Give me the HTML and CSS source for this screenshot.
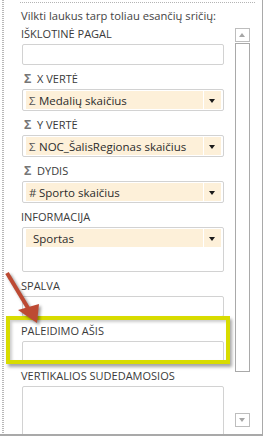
FILE: index.html
```html
<!DOCTYPE html>
<html lang="lt">
<head>
<meta charset="utf-8">
<title>Laukų sritys</title>
<link rel="stylesheet" href="styles.css">
</head>
<body>
<div class="pane">
  <div class="hint">Vilkti laukus tarp toliau esančių sričių:</div>
  <div class="main">
    <div class="fields">
      <section class="area">
        <div class="label">IŠKLOTINĖ PAGAL</div>
        <div class="box"></div>
      </section>
      <section class="area">
        <div class="label"><span class="sigma">Σ</span>X VERTĖ</div>
        <div class="box"><div class="item"><span class="sym">Σ</span><span class="name">Medalių skaičius</span><span class="drop"></span></div></div>
      </section>
      <section class="area">
        <div class="label"><span class="sigma">Σ</span>Y VERTĖ</div>
        <div class="box"><div class="item"><span class="sym">Σ</span><span class="name">NOC_ŠalisRegionas skaičius</span><span class="drop"></span></div></div>
      </section>
      <section class="area">
        <div class="label"><span class="sigma">Σ</span>DYDIS</div>
        <div class="box"><div class="item"><span class="sym hash">#</span><span class="name">Sporto skaičius</span><span class="drop"></span></div></div>
      </section>
      <section class="area">
        <div class="label">INFORMACIJA</div>
        <div class="box tall"><div class="item"><span class="name plain">Sportas</span><span class="drop"></span></div></div>
      </section>
      <section class="area">
        <div class="label">SPALVA</div>
        <div class="box"></div>
      </section>
      <section class="area">
        <div class="label">PALEIDIMO AŠIS</div>
        <div class="box"></div>
      </section>
      <section class="area">
        <div class="label">VERTIKALIOS SUDEDAMOSIOS</div>
        <div class="box big"></div>
      </section>
    </div>
    <div class="scroll">
      <div class="sbtn up"></div>
      <div class="thumb"></div>
      <div class="gap"></div>
      <div class="sbtn down"></div>
    </div>
  </div>
  <div class="highlight"></div>
  <svg class="arrow" width="60" height="70" viewBox="0 0 60 70">
    <line x1="7" y1="4" x2="28" y2="39" class="shaft"/>
    <polygon points="18,41 39,35 37,54" class="head"/>
  </svg>
</div>
</body>
</html>
```

FILE: styles.css
```css
html, body {
  margin: 0;
  padding: 0;
  background: #ffffff;
}
body {
  width: 268px;
  height: 438px;
  overflow: hidden;
  font-family: "Open Sans", "Noto Sans", "Liberation Sans", sans-serif;
  color: #3c3c3c;
}
.pane {
  position: relative;
  width: 263px;
  height: 436px;
  box-sizing: border-box;
  border-right: 1px solid #a9a9a9;
  border-bottom: 2px solid #a9a9a9;
  overflow: hidden;
  padding-top: 2px;
  background:
    repeating-linear-gradient(to bottom, #b8b8b8 0 1px, transparent 1px 2px) 2px 0 / 2px 100% no-repeat,
    #ffffff;
}
.hint {
  margin: 0 7px 0 20px;
  border-top: 1px dotted #b4b4b4;
  padding: 5px 0 0 1px;
  font-size: 11.2px;
  line-height: 16px;
  color: #444;
}
.main {
  display: flex;
  gap: 11px;
  padding-left: 21px;
  margin-top: 3px;
}
.fields {
  width: 203px;
  display: flex;
  flex-direction: column;
}
.area {
  display: flex;
  flex-direction: column;
  margin-bottom: 7px;
}
.label {
  font-size: 11px;
  line-height: 14px;
  height: 14px;
  margin-bottom: 3px;
  color: #3a3a3a;
  white-space: nowrap;
}
.sigma {
  display: inline-block;
  width: 16px;
  padding-left: 3px;
  box-sizing: border-box;
  color: #767676;
  font-weight: 700;
  font-size: 12.5px;
  line-height: 14px;
}
.box {
  margin-left: 1px;
  height: 21px;
  box-sizing: border-box;
  border: 1px solid #d2d2d2;
  border-radius: 2px;
  padding: 1px 2px 1px 3px;
}
.box:has(.item) {
  height: 22px;
}
.box.tall {
  height: 45px;
}
.box.big {
  height: 80px;
}
.item {
  display: flex;
  align-items: center;
  height: 18px;
  background: #fdf0d9;
  font-size: 11.5px;
  color: #2b2b2b;
}
.sym {
  width: 13px;
  padding-left: 3px;
  box-sizing: border-box;
  color: #555;
  flex: none;
}
.sym.hash {
  color: #444;
}
.name {
  flex: 1;
  white-space: nowrap;
  overflow: hidden;
}
.name.plain {
  padding-left: 7px;
}
.drop {
  flex: none;
  width: 17px;
  height: 18px;
  border-left: 1px solid #ffffff;
  position: relative;
}
.drop::after {
  content: "";
  position: absolute;
  left: 5px;
  top: 8px;
  border-left: 3.5px solid transparent;
  border-right: 3.5px solid transparent;
  border-top: 4px solid #1a1a1a;
}
.scroll {
  width: 15px;
  display: flex;
  flex-direction: column;
  margin-top: 1px;
}
.sbtn {
  height: 14px;
  box-sizing: border-box;
  border: 1px solid #bdbdbd;
  position: relative;
  flex: none;
}
.sbtn::after {
  content: "";
  position: absolute;
  left: 3px;
  top: 4px;
  border-left: 3.5px solid transparent;
  border-right: 3.5px solid transparent;
}
.sbtn.up::after {
  border-bottom: 4px solid #a6a6a6;
}
.sbtn.down::after {
  border-top: 4px solid #a6a6a6;
}
.thumb {
  height: 329px;
  margin-top: 1px;
  box-sizing: border-box;
  border: 1px solid #a9a9a9;
  flex: none;
}
.gap {
  height: 41px;
  flex: none;
}
.highlight {
  position: absolute;
  left: 6px;
  top: 316px;
  width: 224px;
  height: 48px;
  box-sizing: border-box;
  border: 4px solid #d8dc00;
  box-shadow: 2px 3px 3px rgba(0, 0, 0, 0.35), inset 2px 2px 3px rgba(0, 0, 0, 0.2);
}
.arrow {
  position: absolute;
  left: 0;
  top: 269px;
  overflow: visible;
  filter: drop-shadow(2px 2px 1.5px rgba(0, 0, 0, 0.4));
}
.shaft {
  stroke: #bd4a33;
  stroke-width: 4;
  stroke-linecap: butt;
}
.head {
  fill: #bd4a33;
}
```
